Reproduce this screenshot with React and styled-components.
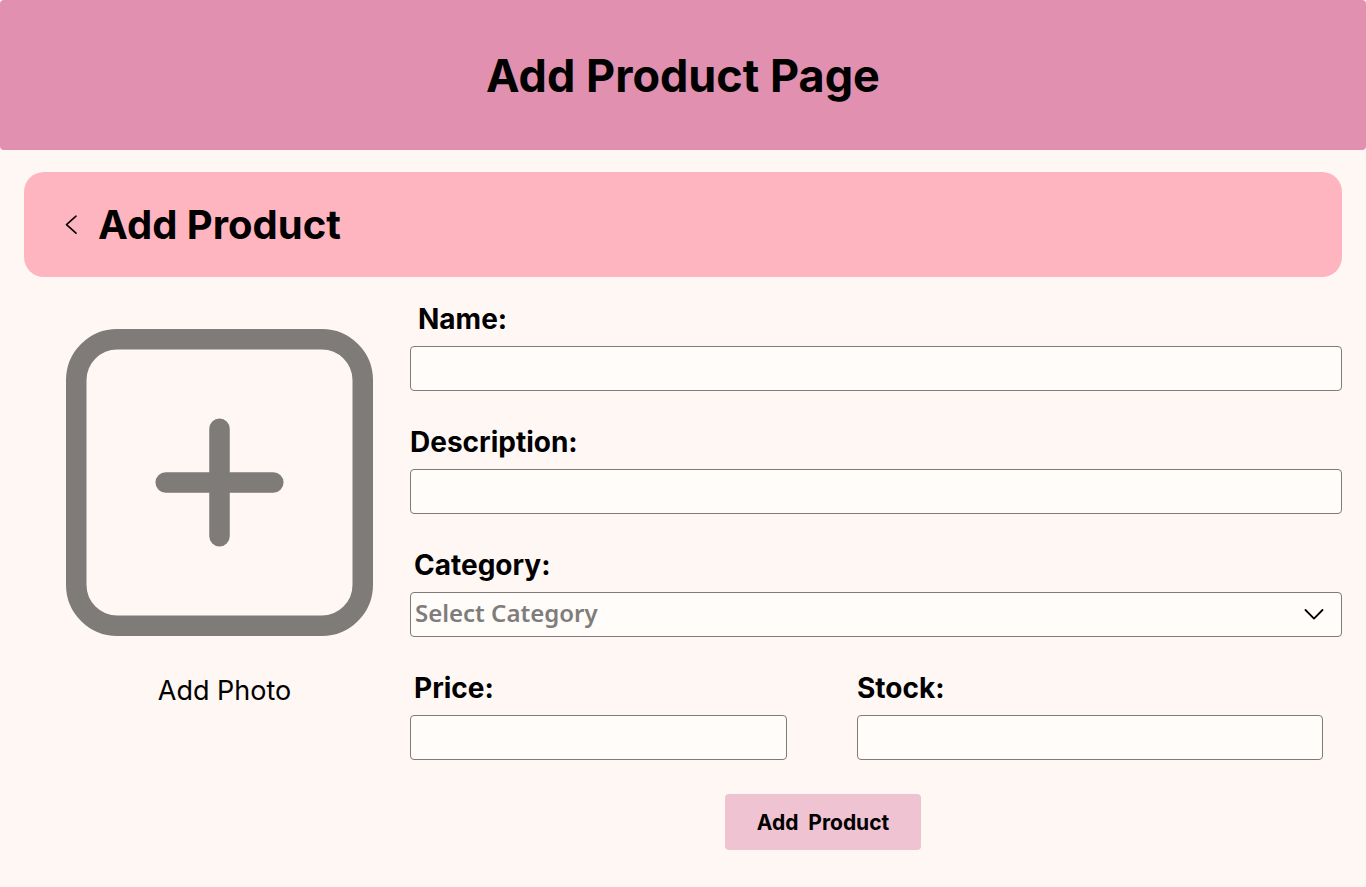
import React from "react";
import styled, { createGlobalStyle } from "styled-components";

const GlobalStyle = createGlobalStyle`
  *, *::before, *::after { box-sizing: border-box; }
  body {
    margin: 0;
    background: #fff7f4;
    color: #000;
    font-family: Inter, "Liberation Sans", sans-serif;
  }
  button, input, select { font: inherit; color: inherit; }
`;

const Page = styled.div`
  min-height: 100vh;
  padding-bottom: 36px;
`;

const Banner = styled.header`
  display: flex;
  align-items: center;
  justify-content: center;
  min-height: 150px;
  padding: 2px 24px 0;
  border-radius: 4px;
  background: #e190b0;
`;

const BannerTitle = styled.h1`
  margin: 0;
  font-size: 45px;
  line-height: 56px;
  font-weight: 700;
`;

const TitleBar = styled.section`
  display: flex;
  align-items: center;
  gap: 20px;
  min-height: 105px;
  margin: 22px 24px 0;
  padding: 0 40px;
  border-radius: 20px;
  background: #ffb5c0;
`;

const BackButton = styled.button`
  display: flex;
  padding: 0;
  border: 0;
  background: none;
  cursor: pointer;
`;

const Title = styled.h2`
  margin: 0;
  font-size: 40px;
  line-height: 48px;
  font-weight: 700;
`;

const Content = styled.main`
  display: grid;
  grid-template-columns: 307px minmax(0, 1fr);
  gap: 37px;
  align-items: start;
  padding: 25px 24px 0 66px;
`;

const PhotoButton = styled.button`
  display: flex;
  flex-direction: column;
  gap: 38px;
  margin-top: 27px;
  padding: 0;
  border: 0;
  background: none;
  cursor: pointer;
`;

const PhotoCaption = styled.span`
  padding-left: 10px;
  align-self: stretch;
  text-align: center;
  font-size: 27px;
  line-height: 34px;
`;

const Form = styled.form`
  display: flex;
  flex-direction: column;
  gap: 34px;
`;

const Field = styled.div`
  display: flex;
  flex-direction: column;
  gap: 10px;
`;

const Label = styled.label`
  padding-left: ${({ $inset = 0 }) => $inset}px;
  font-size: 28px;
  line-height: 34px;
  font-weight: 700;
`;

const TextInput = styled.input`
  width: 100%;
  height: 45px;
  padding: 0 8px;
  border: 1px solid #7f7b78;
  border-radius: 4px;
  background: #fffcf9;
  font-size: 24px;
`;

const SelectBox = styled.div`
  display: grid;
  align-items: center;

  > * { grid-area: 1 / 1; }
  > svg {
    justify-self: end;
    margin-right: 18px;
    pointer-events: none;
  }
`;

const Select = styled.select`
  appearance: none;
  width: 100%;
  height: 45px;
  padding: 0 48px 4px 4px;
  border: 1px solid #7f7b78;
  border-radius: 4px;
  background: #fffcf9;
  color: #7f7d7b;
  font-family: "Noto Sans", "Open Sans", sans-serif;
  font-size: 24px;
  font-weight: 600;
`;

const FieldRow = styled.div`
  display: grid;
  grid-template-columns: 377fr 466fr;
  gap: 70px;
  padding-right: 19px;
`;

const Actions = styled.div`
  display: flex;
  justify-content: center;
  padding-right: 106px;
`;

const SubmitButton = styled.button`
  min-width: 196px;
  height: 56px;
  border: 0;
  border-radius: 4px;
  background: #efc3d2;
  font-size: 21px;
  font-weight: 700;
  cursor: pointer;
`;

const BackIcon = () => (
  <svg width="14" height="20" viewBox="0 0 14 20" fill="none" stroke="#000" strokeWidth="1.6" strokeLinecap="round" strokeLinejoin="round" aria-hidden="true">
    <path d="M12 1.2 2.5 9.7 12 18.2" />
  </svg>
);

const ChevronIcon = () => (
  <svg width="20" height="12" viewBox="0 0 20 12" fill="none" stroke="#000" strokeWidth="1.8" strokeLinecap="round" strokeLinejoin="round" aria-hidden="true">
    <path d="M1.5 1 10 9.6 18.5 1" />
  </svg>
);

const AddPhotoIcon = () => (
  <svg width="307" height="307" viewBox="0 0 307 307" fill="none" stroke="#7f7b78" strokeWidth="20.5" strokeLinecap="round" aria-hidden="true">
    <rect x="10.25" y="10.25" width="286.5" height="286.5" rx="41" />
    <path d="M153.5 99.7v107.6M99.7 153.5h107.6" />
  </svg>
);

export default function App() {
  return (
    <>
      <GlobalStyle />
      <Page>
        <Banner>
          <BannerTitle>Add Product Page</BannerTitle>
        </Banner>
        <TitleBar>
          <BackButton type="button" aria-label="Back">
            <BackIcon />
          </BackButton>
          <Title>Add Product</Title>
        </TitleBar>
        <Content>
          <PhotoButton type="button">
            <AddPhotoIcon />
            <PhotoCaption>Add Photo</PhotoCaption>
          </PhotoButton>
          <Form onSubmit={(event) => event.preventDefault()}>
            <Field>
              <Label htmlFor="name" $inset={8}>Name:</Label>
              <TextInput id="name" type="text" />
            </Field>
            <Field>
              <Label htmlFor="description">Description:</Label>
              <TextInput id="description" type="text" />
            </Field>
            <Field>
              <Label htmlFor="category" $inset={4}>Category:</Label>
              <SelectBox>
                <Select id="category" defaultValue="">
                  <option value="">Select Category</option>
                </Select>
                <ChevronIcon />
              </SelectBox>
            </Field>
            <FieldRow>
              <Field>
                <Label htmlFor="price" $inset={4}>Price:</Label>
                <TextInput id="price" type="text" inputMode="decimal" />
              </Field>
              <Field>
                <Label htmlFor="stock">Stock:</Label>
                <TextInput id="stock" type="text" inputMode="numeric" />
              </Field>
            </FieldRow>
            <Actions>
              <SubmitButton type="submit">Add{"\u00a0 "}Product</SubmitButton>
            </Actions>
          </Form>
        </Content>
      </Page>
    </>
  );
}
